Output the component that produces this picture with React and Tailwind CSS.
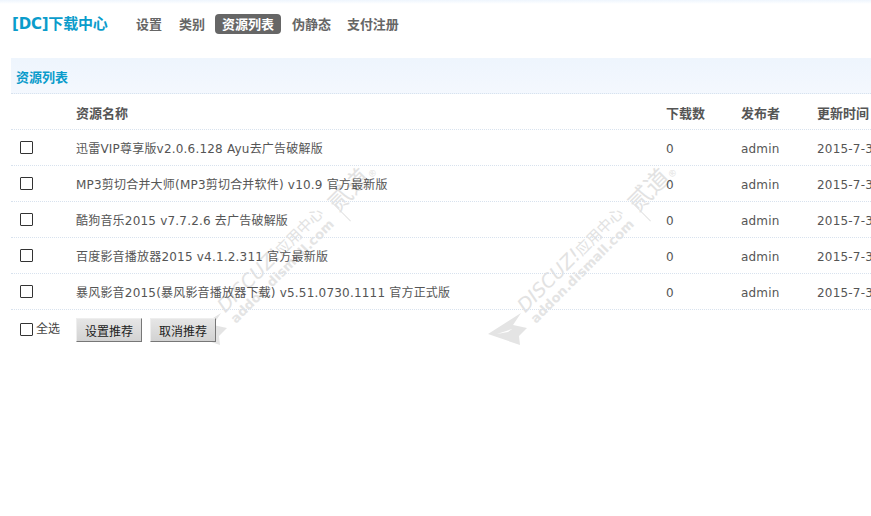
const rows = [
  "迅雷VIP尊享版v2.0.6.128 Ayu去广告破解版",
  "MP3剪切合并大师(MP3剪切合并软件) v10.9 官方最新版",
  "酷狗音乐2015 v7.7.2.6 去广告破解版",
  "百度影音播放器2015 v4.1.2.311 官方最新版",
  "暴风影音2015(暴风影音播放器下载) v5.51.0730.1111 官方正式版",
];

function Box() {
  return <span className="block w-[13px] h-[13px] border border-[#333] bg-white rounded-[1px]" />;
}

function Watermark({ left }) {
  return (
    <div className="absolute top-0 w-[200px] h-[360px] pointer-events-none">
      <div className="absolute top-0 w-[200px] h-[360px]" style={{ left }}>
        <svg className="absolute left-0 top-[312px]" width="40" height="34" viewBox="0 0 40 34">
          <path d="M0 22 L33 1 L25 13 L39 16 L31 24 L32 33 Z M9 22 L24 17 L20 20 Z" fill="#e4e4e4" fillRule="evenodd" />
        </svg>
        <span className="absolute left-[40px] top-[296px] origin-bottom-left -rotate-45 italic text-[19px] leading-[18px] text-[#e2e2e2] whitespace-nowrap">DISCUZ!<span className="not-italic text-[15px]">应用中心</span></span>
        <span className="absolute left-[50px] top-[312px] origin-bottom-left -rotate-45 font-bold text-[13px] leading-[14px] tracking-[0.1px] text-[#e4e4e4] whitespace-nowrap">addon.dismall.com</span>
        <span className="absolute left-[143px] top-[202px] w-[1px] h-[27px] origin-top -rotate-45 bg-[#e2e2e2]" />
        <span className="absolute left-[156px] top-[190px] origin-bottom-left -rotate-45 text-[24px] leading-[24px] text-[#e2e2e2] whitespace-nowrap">贰道<span className="text-[9px]">®</span></span>
      </div>
    </div>
  );
}

const button = "h-6 w-[66px] pt-[4px] leading-4 bg-gradient-to-b from-[#e6e6e6] to-[#d2d2d2] text-[#222] border border-[#eee] border-r-[#777] border-b-[#777]";

export default function App() {
  return (
    <div className="relative w-[871px] h-[516px] overflow-hidden bg-white text-[12px] text-[#555] font-['DejaVu_Sans','Noto_Sans_CJK_SC',sans-serif]">
      <Watermark left={188} />
      <Watermark left={488} />
      <div className="relative z-10">
        <div className="h-1 bg-gradient-to-b from-[#eef5fd] to-white" />
        <header className="h-[54px] flex items-center pl-3 pb-[14px]">
          <h1 className="w-[117px] pt-[1px] text-[15px] tracking-[-0.2px] font-bold text-[#0a9ccb] whitespace-nowrap">[DC]下载中心</h1>
          <nav className="flex items-center gap-[4px] font-bold text-[#666] text-[13px]">
            <a className="px-[7px] h-5 leading-[22px]">设置</a>
            <a className="px-[6px] h-5 leading-[22px]">类别</a>
            <a className="px-[7px] h-5 leading-[22px] rounded-[4px] bg-[#666] text-white">资源列表</a>
            <a className="px-[7px] h-5 leading-[22px]">伪静态</a>
            <a className="pl-[5px] pr-[6px] h-5 leading-[22px] tracking-[-0.1px]">支付注册</a>
          </nav>
        </header>
        <main className="ml-[11px] w-[1000px]">
          <div className="h-[36px] pl-[5px] pt-[4px] flex items-center text-[13px] font-bold text-[#0a9ccb] bg-gradient-to-b from-[#eef5fd] to-[#f4f8fe] border-b border-dotted border-[#d8e2ee]">资源列表</div>
          <div className="h-9 pt-[4px] flex items-center text-[13px] font-bold border-b border-dotted border-[#d8e2ee] text-[#555]">
            <span className="w-[65px]" />
            <span className="w-[590px]">资源名称</span>
            <span className="w-[75px]">下载数</span>
            <span className="w-[76px]">发布者</span>
            <span>更新时间</span>
          </div>
          {rows.map((name) => (
            <div key={name} className="h-9 pt-[2px] flex items-center tracking-[0.2px] border-b border-dotted border-[#d8e2ee]">
              <span className="w-[65px] pl-[9px] -mt-[2px]"><Box /></span>
              <span className="w-[590px] whitespace-nowrap">{name}</span>
              <span className="w-[75px]">0</span>
              <span className="w-[76px]">admin</span>
              <span className="whitespace-nowrap">2015-7-30</span>
            </div>
          ))}
          <div className="h-[36px] pt-[4px] flex items-center">
            <span className="w-[65px] pl-[9px] flex items-center gap-[3px] text-[#444] -mt-[2px]"><Box />全选</span>
            <button className={button + " mr-2"}>设置推荐</button>
            <button className={button}>取消推荐</button>
          </div>
        </main>
      </div>
    </div>
  );
}
